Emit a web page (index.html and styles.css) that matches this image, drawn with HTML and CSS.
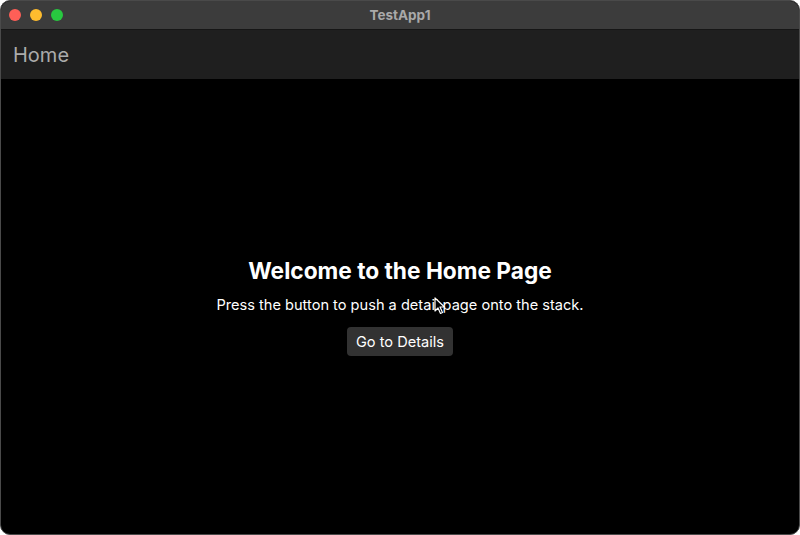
FILE: index.html
```html
<!DOCTYPE html>
<html lang="en">
<head>
    <meta charset="UTF-8">
    <meta name="viewport" content="width=device-width, initial-scale=1.0">
    <title>TestApp1</title>
    <link rel="stylesheet" href="styles.css">
</head>
<body>

    <div class="window">
        <div class="titlebar">
            <div class="lights">
                <span class="light red"></span>
                <span class="light yellow"></span>
                <span class="light green"></span>
            </div>
            <div class="title">TestApp1</div>
        </div>

        <header class="navbar">
            <h1>Home</h1>
        </header>

        <main class="page">
            <h2>Welcome to the Home Page</h2>
            <p>Press the button to push a detail page onto the stack.</p>
            <button class="btn">Go to Details</button>

            <!-- mouse pointer -->
            <svg class="cursor" width="12" height="18" viewBox="0 0 12 18">
                <path d="M1 1 L1 14 L4 11 L6.5 16.5 L8.5 15.5 L6 10 L10.5 10 Z" fill="#000" stroke="#fff" stroke-width="1.2" stroke-linejoin="round"/>
            </svg>
        </main>
    </div>

</body>
</html>
```

FILE: styles.css
```css
html, body {
    margin: 0;
    padding: 0;
    background-color: #ffffff;
}

body {
    font-family: Inter, "Noto Sans", sans-serif;
}

.window {
    width: 800px;
    height: 535px;
    box-sizing: border-box;
    border: 1px solid #4a4a4a;
    border-radius: 10px;
    overflow: hidden;
    background-color: #000;
    display: flex;
    flex-direction: column;
}

.titlebar {
    height: 28px;
    flex-shrink: 0;
    background-color: #3c3c3c;
    border-bottom: 1px solid #161616;
    display: flex;
    align-items: center;
    justify-content: center;
    position: relative;
}

.lights {
    position: absolute;
    left: 8px;
    top: 8px;
    display: flex;
    gap: 9px;
}

.light {
    width: 12px;
    height: 12px;
    border-radius: 50%;
}

.light.red {
    background-color: #fe5f57;
}

.light.yellow {
    background-color: #febc2e;
}

.light.green {
    background-color: #28c840;
}

.title {
    font-size: 13.5px;
    font-weight: 700;
    color: #a9a9a9;
}

.navbar {
    height: 49px;
    flex-shrink: 0;
    background-color: #1f1f1f;
    display: flex;
    align-items: center;
    padding: 0 12px;
}

.navbar h1 {
    margin: 0;
    font-size: 20px;
    font-weight: 400;
    color: #ababab;
}

.page {
    flex: 1;
    display: flex;
    flex-direction: column;
    align-items: center;
    justify-content: center;
    color: #fff;
    position: relative;
}

.page h2 {
    margin: 0 0 12px;
    font-size: 22.7px;
    font-weight: 700;
}

.page p {
    margin: 0 0 13px;
    font-size: 14.6px;
}

.btn {
    font-family: inherit;
    font-size: 14.6px;
    color: #fff;
    background-color: #323232;
    border: none;
    border-radius: 4px;
    padding: 5px 9px;
    height: 29px;
}

.cursor {
    position: absolute;
    left: 433px;
    top: 218px;
}
```
